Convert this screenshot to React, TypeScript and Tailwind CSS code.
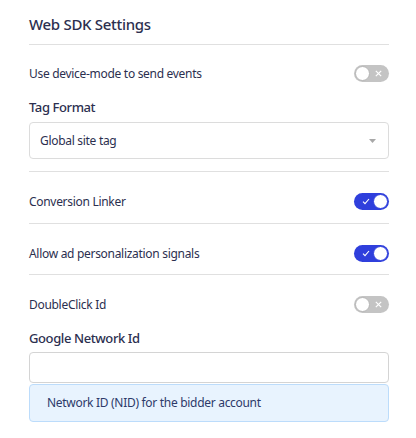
import { useState } from "react";

function Toggle({ on }: { on: boolean }) {
  return (
    <div
      className={
        on
          ? "relative w-[35px] h-[17px] rounded-full bg-[#2f3fdc]"
          : "relative w-[35px] h-[17px] rounded-full bg-[#c4c4c4]"
      }
    >
      {on ? (
        <>
          <svg className="absolute left-[8px] top-[5px]" width="8" height="7" viewBox="0 0 8 7">
            <path d="M1 3.6 L3 5.6 L7 1" fill="none" stroke="#fff" strokeWidth="1.1" />
          </svg>
          <div className="absolute right-[1px] top-[1px] w-[15px] h-[15px] rounded-full bg-white border border-[#2f3fdc]" />
        </>
      ) : (
        <>
          <div className="absolute left-[1px] top-[1px] w-[15px] h-[15px] rounded-full bg-white border border-[#b5b5b5]" />
          <svg className="absolute right-[7px] top-[5px]" width="7" height="7" viewBox="0 0 7 7">
            <path d="M0.8 0.8 L6.2 6.2 M6.2 0.8 L0.8 6.2" fill="none" stroke="#fff" strokeWidth="1.2" />
          </svg>
        </>
      )}
    </div>
  );
}

function Row({ label, on }: { label: string; on: boolean }) {
  return (
    <div className="flex items-center justify-between h-[17px]">
      <span className="text-[12px] leading-[17px] tracking-[-0.3px] text-[#2c2f4f]">{label}</span>
      <Toggle on={on} />
    </div>
  );
}

export default function App() {
  const [nid] = useState("");

  return (
    <div className="w-[416px] h-[438px] bg-white font-['Noto_Sans',sans-serif] text-[#2c2f4f]">
      <div className="px-[29px]">
        <div className="w-[360px] flex flex-col">
          {/* Titre */}
          <h2 className="pt-[12px] pb-[8px] text-[15px] leading-[24px] tracking-[-0.3px] font-medium">Web SDK Settings</h2>
          <div className="h-px bg-[#e0e0e0]" />

          <div className="mt-[20px]">
            <Row label="Use device-mode to send events" on={false} />
          </div>

          <label className="mt-[15px] text-[13px] leading-[20px] tracking-[-0.4px] font-medium">Tag Format</label>
          <div className="mt-[5px] h-[37px] border border-[#dcdcdc] rounded-[4px] flex items-center justify-between pl-[10px] pr-[12px]">
            <span className="text-[12px] tracking-[-0.3px] text-[#2c2f4f]">Global site tag</span>
            <svg width="7" height="4" viewBox="0 0 7 4">
              <path d="M0 0 H7 L3.5 4 Z" fill="#a8a8a8" />
            </svg>
          </div>

          <div className="mt-[12px] h-px bg-[#e0e0e0]" />
          <div className="mt-[21px]">
            <Row label="Conversion Linker" on />
          </div>

          <div className="mt-[13px] h-px bg-[#e0e0e0]" />
          <div className="mt-[21px]">
            <Row label="Allow ad personalization signals" on />
          </div>

          <div className="mt-[12px] h-px bg-[#e0e0e0]" />
          <div className="mt-[21px]">
            <Row label="DoubleClick Id" on={false} />
          </div>

          <label className="mt-[15px] text-[13px] leading-[20px] tracking-[-0.4px] font-medium">Google Network Id</label>
          <input
            value={nid}
            readOnly
            className="mt-[4px] h-[31px] border border-[#d4d4d4] rounded-[4px] px-[10px] text-[12px] outline-none"
          />
          <div className="mt-[1px] h-[38px] bg-[#e8f3fe] border border-[#bcdcfb] rounded-[4px] flex items-center pl-[17px]">
            <span className="text-[12px] tracking-[-0.3px] text-[#2d3a6a]">Network ID (NID) for the bidder account</span>
          </div>
        </div>
      </div>
    </div>
  );
}
